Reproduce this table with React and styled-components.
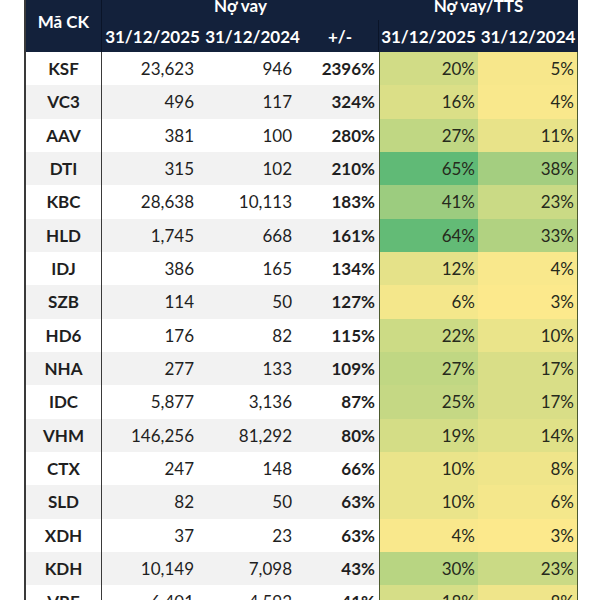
import styled, { createGlobalStyle } from "styled-components";

const GlobalStyle = createGlobalStyle`
  html, body {
    margin: 0;
    padding: 0;
    background: #ffffff;
    overflow: hidden;
  }
  body {
    font-family: Lato, "Open Sans", "Liberation Sans", sans-serif;
  }
`;

const COLS = "76px 101px 99px 77px 99px 100px";

const Page = styled.div`
  width: 600px;
  height: 600px;
  padding-left: 24px;
  box-sizing: border-box;
  overflow: hidden;
`;

const Table = styled.div`
  width: 552px;
  margin-top: -10px;
  border-left: 2px solid #3a3a3a;
  box-sizing: content-box;
  font-size: 17px;
`;

const Header = styled.div`
  display: grid;
  grid-template-columns: ${COLS};
  grid-template-rows: 30px 32px;
  background: #13213b;
  color: #ffffff;
  font-weight: 700;
`;

const HeadCell = styled.div`
  display: flex;
  align-items: center;
  justify-content: center;
  grid-column: ${(p) => p.$col};
  grid-row: ${(p) => p.$row};
  border-right: ${(p) => (p.$sep ? "1px solid #0a1428" : "none")};
  white-space: nowrap;
`;

const Row = styled.div`
  display: grid;
  grid-template-columns: ${COLS};
  height: 33.34px;
  background: ${(p) => (p.$alt ? "#f2f2f2" : "#ffffff")};
  color: #1f1f1f;
`;

const Cell = styled.div`
  display: flex;
  align-items: center;
  justify-content: ${(p) => (p.$center ? "center" : "flex-end")};
  padding-right: ${(p) => p.$pad || 0}px;
  font-weight: ${(p) => (p.$bold ? 700 : 400)};
  border-right: ${(p) => p.$line || "none"};
  border-left: ${(p) => p.$lineLeft || "none"};
  white-space: nowrap;
`;

const HeatCell = styled(Cell)`
  color: #262a1c;
`;

const rows = [
  ["KSF", "23,623", "946", "2396%", 20, 5],
  ["VC3", "496", "117", "324%", 16, 4],
  ["AAV", "381", "100", "280%", 27, 11],
  ["DTI", "315", "102", "210%", 65, 38],
  ["KBC", "28,638", "10,113", "183%", 41, 23],
  ["HLD", "1,745", "668", "161%", 64, 33],
  ["IDJ", "386", "165", "134%", 12, 4],
  ["SZB", "114", "50", "127%", 6, 3],
  ["HD6", "176", "82", "115%", 22, 10],
  ["NHA", "277", "133", "109%", 27, 17],
  ["IDC", "5,877", "3,136", "87%", 25, 17],
  ["VHM", "146,256", "81,292", "80%", 19, 14],
  ["CTX", "247", "148", "66%", 10, 8],
  ["SLD", "82", "50", "63%", 10, 6],
  ["XDH", "37", "23", "63%", 4, 3],
  ["KDH", "10,149", "7,098", "43%", 30, 23],
  ["VRE", "6,401", "4,593", "41%", 18, 8],
];

// Excel green-yellow colour scale over both ratio columns
const heat = (v) => {
  const t = Math.max(0, Math.min(1, (v - 3) / (65 - 3)));
  const from = [252, 233, 140];
  const to = [96, 186, 118];
  const c = from.map((f, i) => Math.round(f + (to[i] - f) * t));
  return `rgb(${c[0]}, ${c[1]}, ${c[2]})`;
};

const App = () => {
  return (
    <Page>
      <GlobalStyle />
      <Table>
        <Header>
          <HeadCell $col="1" $row="1 / span 2" $sep>
            Mã CK
          </HeadCell>
          <HeadCell $col="2 / span 3" $row="1">
            Nợ vay
          </HeadCell>
          <HeadCell $col="5 / span 2" $row="1">
            Nợ vay/TTS
          </HeadCell>
          <HeadCell $col="2" $row="2">
            31/12/2025
          </HeadCell>
          <HeadCell $col="3" $row="2">
            31/12/2024
          </HeadCell>
          <HeadCell $col="4" $row="2" $sep>
            +/-
          </HeadCell>
          <HeadCell $col="5" $row="2">
            31/12/2025
          </HeadCell>
          <HeadCell $col="6" $row="2">
            31/12/2024
          </HeadCell>
        </Header>
        {rows.map(([code, a, b, chg, r1, r2], i) => (
          <Row key={code} $alt={i % 2 === 1}>
            <Cell $center $bold $line="1.5px solid #3a3a3a">
              {code}
            </Cell>
            <Cell $pad={9}>{a}</Cell>
            <Cell $pad={10}>{b}</Cell>
            <Cell $pad={4} $bold>
              {chg}
            </Cell>
            <HeatCell
              $pad={3}
              $lineLeft="1px solid #4d5a2e"
              style={{ background: heat(r1) }}
            >
              {r1}%
            </HeatCell>
            <HeatCell
              $pad={3}
              $line="1px solid #4d5a2e"
              style={{ background: heat(r2) }}
            >
              {r2}%
            </HeatCell>
          </Row>
        ))}
      </Table>
    </Page>
  );
};

export default App;
